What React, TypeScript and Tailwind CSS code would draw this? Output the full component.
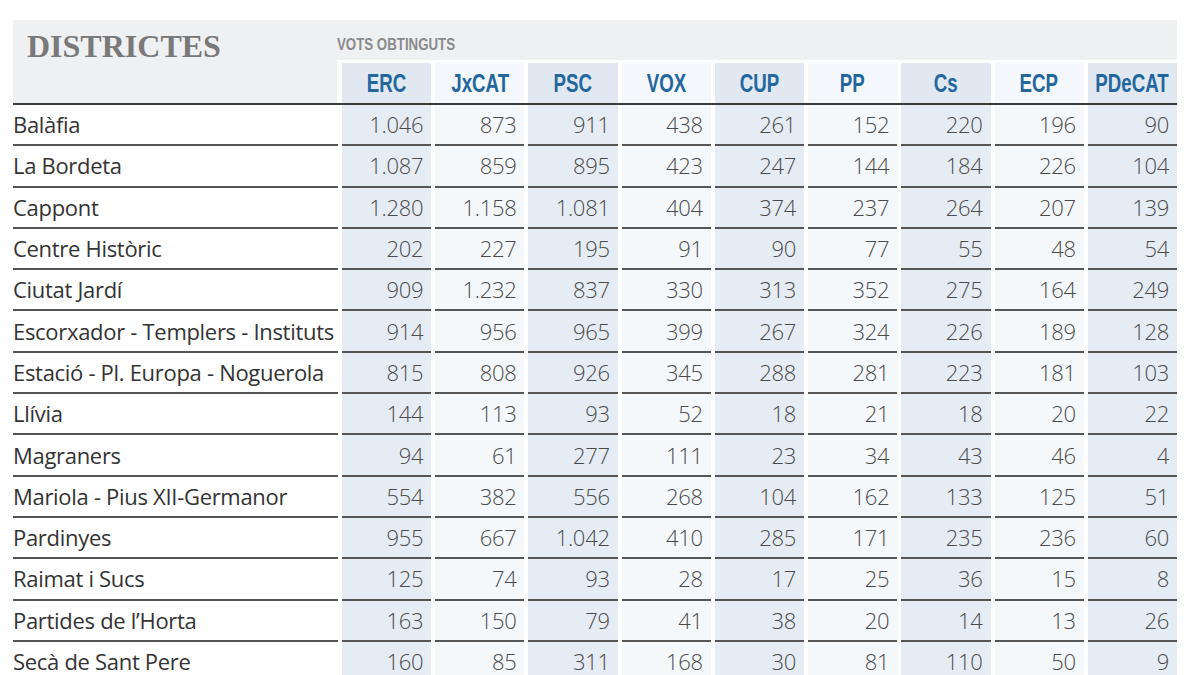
const parties = ["ERC", "JxCAT", "PSC", "VOX", "CUP", "PP", "Cs", "ECP", "PDeCAT"];

const rows: [string, string[]][] = [
  ["Balàfia", ["1.046", "873", "911", "438", "261", "152", "220", "196", "90"]],
  ["La Bordeta", ["1.087", "859", "895", "423", "247", "144", "184", "226", "104"]],
  ["Cappont", ["1.280", "1.158", "1.081", "404", "374", "237", "264", "207", "139"]],
  ["Centre Històric", ["202", "227", "195", "91", "90", "77", "55", "48", "54"]],
  ["Ciutat Jardí", ["909", "1.232", "837", "330", "313", "352", "275", "164", "249"]],
  ["Escorxador - Templers - Instituts", ["914", "956", "965", "399", "267", "324", "226", "189", "128"]],
  ["Estació - Pl. Europa - Noguerola", ["815", "808", "926", "345", "288", "281", "223", "181", "103"]],
  ["Llívia", ["144", "113", "93", "52", "18", "21", "18", "20", "22"]],
  ["Magraners", ["94", "61", "277", "111", "23", "34", "43", "46", "4"]],
  ["Mariola - Pius XII-Germanor", ["554", "382", "556", "268", "104", "162", "133", "125", "51"]],
  ["Pardinyes", ["955", "667", "1.042", "410", "285", "171", "235", "236", "60"]],
  ["Raimat i Sucs", ["125", "74", "93", "28", "17", "25", "36", "15", "8"]],
  ["Partides de l’Horta", ["163", "150", "79", "41", "38", "20", "14", "13", "26"]],
  ["Secà de Sant Pere", ["160", "85", "311", "168", "30", "81", "110", "50", "9"]],
];

const App = () => {
  return (
    <div className="h-[675px] w-[1200px] overflow-hidden bg-white pl-[13px] pt-[20px]">
      <div className="w-[1164px]">
        {/* header */}
        <div className="flex border-b-2 border-[#3a3a3a]">
          <div className="h-[83px] w-[324px] bg-[#eff0f2] pl-[14px] pt-[10px]">
            <span className="font-['Liberation_Serif',serif] text-[32px] font-bold leading-none text-[#797979]">
              DISTRICTES
            </span>
          </div>
          <div className="flex flex-1 flex-col">
            <div className="h-[40px] bg-[#eff0f2] pt-[12px]">
              <span className="inline-block origin-left scale-x-[0.83] font-['Liberation_Sans',sans-serif] text-[16px] font-bold leading-none text-[#8a8a8a]">
                VOTS OBTINGUTS
              </span>
            </div>
            <div className="mt-[3px] grid h-[40px] grid-cols-9 gap-x-1 pl-[5px]">
              {parties.map((p, i) => (
                <div
                  key={p}
                  className={
                    "flex items-center justify-center " +
                    (i % 2 === 0 ? "bg-[#e1e8f1]" : "bg-[#f4f7fb]")
                  }
                >
                  <span className="inline-block scale-x-[0.72] whitespace-nowrap font-['Liberation_Sans',sans-serif] text-[26px] font-bold leading-none text-[#23679e]">
                    {p}
                  </span>
                </div>
              ))}
            </div>
          </div>
        </div>

        {/* rows */}
        {rows.map(([name, vals]) => (
          <div
            key={name}
            className="grid grid-cols-[325px_repeat(9,minmax(0,1fr))] gap-x-1"
          >
            <div className="flex h-[41.3px] items-center border-b-2 border-[#555] font-['Open_Sans',sans-serif] text-[22px] tracking-[-0.3px] text-[#333]">
              {name}
            </div>
            {vals.map((v, i) => (
              <div
                key={i}
                className={
                  "flex h-[41.3px] items-center justify-end border-b-2 border-[#555] pr-2 font-['Open_Sans',sans-serif] text-[22px] font-light tracking-[-0.3px] text-[#4a4a4a] " +
                  (i % 2 === 0 ? "bg-[#e6ecf4]" : "bg-[#f5f8fb]")
                }
              >
                {v}
              </div>
            ))}
          </div>
        ))}
      </div>
    </div>
  );
};

export default App;
